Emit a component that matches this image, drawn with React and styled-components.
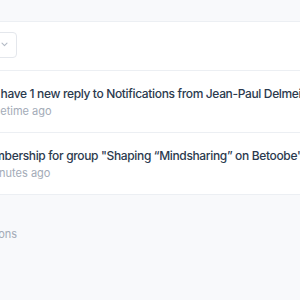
import React from "react";
import styled, { createGlobalStyle } from "styled-components";

const GlobalStyle = createGlobalStyle`
  html, body {
    margin: 0;
    padding: 0;
    background: #f8f9fb;
    font-family: Inter, "Noto Sans", sans-serif;
    -webkit-font-smoothing: antialiased;
  }
`;

const Page = styled.div`
  width: 300px;
  height: 300px;
  overflow: hidden;
  background: #f8f9fb;
`;

const TopBand = styled.div`
  height: 21px;
  border-bottom: 1px solid #eceff3;
`;

const Panel = styled.div`
  background: #fff;
  margin-left: -23px;
  width: 520px;
  border-bottom: 1px solid #eceff3;
`;

const Toolbar = styled.div`
  height: 48px;
  display: flex;
  align-items: center;
  border-bottom: 1px solid #eceff3;
`;

const Select = styled.div`
  width: 40px;
  height: 26px;
  margin-top: -3px;
  box-sizing: border-box;
  border: 1px solid #e4e7ec;
  border-radius: 4px;
  display: flex;
  align-items: center;
  justify-content: flex-end;
  padding-right: 8px;
  color: #b3bac5;
`;

const Item = styled.div`
  height: ${(p) => (p.$last ? 61 : 62)}px;
  box-sizing: border-box;
  padding-top: 15px;
  border-bottom: 1px solid ${(p) => (p.$last ? "transparent" : "#eceff3")};
  display: flex;
  flex-direction: column;
  gap: 1px;
`;

const Title = styled.div`
  font-size: 12px;
  font-weight: 500;
  letter-spacing: -0.35px;
  color: #2b3a4e;
  white-space: nowrap;
  line-height: 16px;
`;

const Time = styled.div`
  font-size: 11px;
  color: #a3abb7;
  line-height: 16px;
`;

const Footer = styled.div`
  padding: 32px 0 0 0;
  margin-left: -22px;
  font-size: 11px;
  color: #a3abb7;
`;

const Chevron = () => (
  <svg width="7" height="5" viewBox="0 0 7 5" fill="none">
    <path d="M1 1.2l2.5 2.5 2.5-2.5" stroke="currentColor" strokeWidth="1.1" strokeLinecap="round" strokeLinejoin="round" />
  </svg>
);

export default function App() {
  return (
    <Page>
      <GlobalStyle />
      <TopBand />
      <Panel>
        <Toolbar>
          <Select>
            <Chevron />
          </Select>
        </Toolbar>
        <Item>
          <Title>You have 1 new reply to Notifications from Jean-Paul Delmeire</Title>
          <Time>Sometime ago</Time>
        </Item>
        <Item $last>
          <Title>Membership for group "Shaping “Mindsharing” on Betoobe"</Title>
          <Time>5 minutes ago</Time>
        </Item>
      </Panel>
      <Footer>Actions</Footer>
    </Page>
  );
}
